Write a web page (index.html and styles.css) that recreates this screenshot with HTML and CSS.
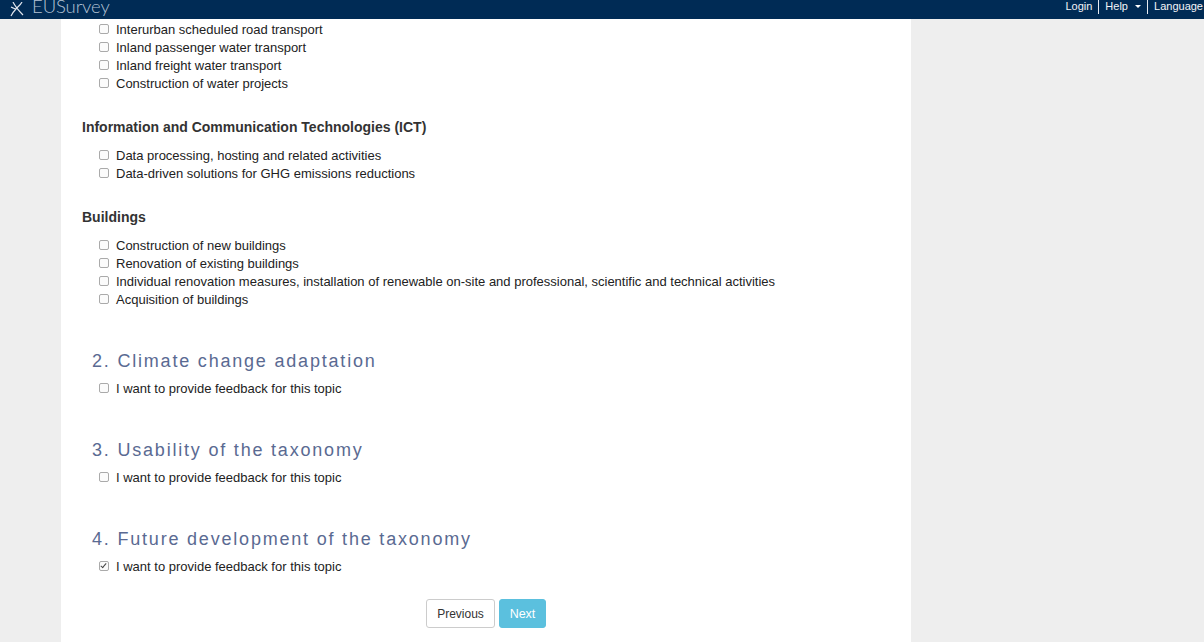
FILE: index.html
```html
<!DOCTYPE html>
<html lang="en">
<head>
    <meta charset="UTF-8">
    <title>EUSurvey</title>
    <link rel="stylesheet" href="styles.css">
</head>
<body>

    <header class="topbar">
        <div class="brand">
            <svg class="brand-icon" width="14" height="15" viewBox="0 0 14 15">
                <path d="M3 0 C5 4 8 8 13 13 M12 0 C10 4 7 5 6 7 C4 9 3 10 1 14 M1 5 C3 6 5 7 6 7" fill="none" stroke="#dfe5ee" stroke-width="1.2"/>
            </svg>
            <span class="brand-name">EUSurvey</span>
        </div>
        <nav class="topnav">
            <a>Login</a>
            <span class="sep"></span>
            <a>Help <span class="caret"></span></a>
            <span class="sep"></span>
            <a>Language</a>
        </nav>
    </header>

    <main class="page">
        <ul class="options">
            <li><input type="checkbox"> Interurban scheduled road transport</li>
            <li><input type="checkbox"> Inland passenger water transport</li>
            <li><input type="checkbox"> Inland freight water transport</li>
            <li><input type="checkbox"> Construction of water projects</li>
        </ul>

        <h3 class="group">Information and Communication Technologies (ICT)</h3>
        <ul class="options">
            <li><input type="checkbox"> Data processing, hosting and related activities</li>
            <li><input type="checkbox"> Data-driven solutions for GHG emissions reductions</li>
        </ul>

        <h3 class="group">Buildings</h3>
        <ul class="options">
            <li><input type="checkbox"> Construction of new buildings</li>
            <li><input type="checkbox"> Renovation of existing buildings</li>
            <li><input type="checkbox"> Individual renovation measures, installation of renewable on-site and professional, scientific and technical activities</li>
            <li><input type="checkbox"> Acquisition of buildings</li>
        </ul>

        <h2 class="topic">2. Climate change adaptation</h2>
        <ul class="options">
            <li><input type="checkbox"> I want to provide feedback for this topic</li>
        </ul>

        <h2 class="topic">3. Usability of the taxonomy</h2>
        <ul class="options">
            <li><input type="checkbox"> I want to provide feedback for this topic</li>
        </ul>

        <h2 class="topic">4. Future development of the taxonomy</h2>
        <ul class="options">
            <li><input type="checkbox" checked> I want to provide feedback for this topic</li>
        </ul>

        <div class="buttons">
            <button class="btn">Previous</button>
            <button class="btn btn-next">Next</button>
        </div>
    </main>

</body>
</html>
```
FILE: styles.css
```css
html, body {
    height: 642px;
    overflow: hidden;
}
body {
    margin: 0;
    background-color: #eeeeee;
    font-family: "Liberation Sans", Arial, sans-serif;
    font-size: 13px;
    color: #333;
}
.topbar {
    display: flex;
    justify-content: space-between;
    height: 19px;
    background-color: #002b55;
    color: #fff;
    overflow: hidden;
}
.brand {
    display: flex;
    align-items: center;
    gap: 8px;
    padding-left: 10px;
    margin-top: -7px;
    height: 26px;
}
.brand-icon {
    margin-top: 7px;
}
.brand-name {
    font-family: Lato, sans-serif;
    font-weight: 300;
    font-size: 18.5px;
    letter-spacing: -0.1px;
    color: #b4c2d4;
}
.topnav {
    display: flex;
    align-items: flex-start;
    margin-right: 1px;
    font-size: 11px;
    line-height: 13px;
}
.topnav a {
    color: #f2f4f7;
    white-space: nowrap;
}
.sep {
    width: 1px;
    height: 14px;
    margin: 0 6px;
    background-color: #e6eaf0;
}
.caret {
    display: inline-block;
    margin-left: 4px;
    vertical-align: 2px;
    border-top: 3px solid #fff;
    border-left: 3px solid transparent;
    border-right: 3px solid transparent;
}
.page {
    width: 850px;
    height: 623px;
    margin-left: 61px;
    padding-top: 2px;
    background-color: #fff;
    box-sizing: border-box;
}
.options {
    list-style: none;
    margin: 0;
    padding: 0 0 0 38px;
    color: #222;
}
.options li {
    display: flex;
    align-items: center;
    gap: 7px;
    height: 18px;
    line-height: 18px;
}
.options input {
    appearance: none;
    position: relative;
    box-sizing: border-box;
    width: 10px;
    height: 10px;
    margin: -2px 0 0;
    border: 1px solid #aaa;
    border-radius: 2px;
    background-color: #fbfbfb;
}
.options input:checked::after {
    content: "";
    position: absolute;
    left: 2px;
    top: 0;
    width: 2px;
    height: 5px;
    border: solid #444;
    border-width: 0 1.5px 1.5px 0;
    transform: rotate(40deg);
}
.group {
    margin: 25px 0 11px 21px;
    font-size: 14px;
    line-height: 18px;
    font-weight: bold;
    color: #333;
}
.topic {
    margin: 39px 0 6px 31px;
    height: 26px;
    line-height: 26px;
    font-size: 18px;
    font-weight: normal;
    letter-spacing: 1.8px;
    color: #5a6a92;
}
.buttons {
    display: flex;
    justify-content: center;
    gap: 4px;
    margin-top: 23px;
}
.btn {
    width: 69px;
    height: 29px;
    padding: 0;
    border: 1px solid #ccc;
    border-radius: 3px;
    background-color: #fff;
    color: #333;
    font-family: inherit;
    font-size: 12px;
}
.btn-next {
    width: 47px;
    border-color: #5bc0de;
    background-color: #5bc0de;
    color: #fff;
    font-size: 12.5px;
}
```
